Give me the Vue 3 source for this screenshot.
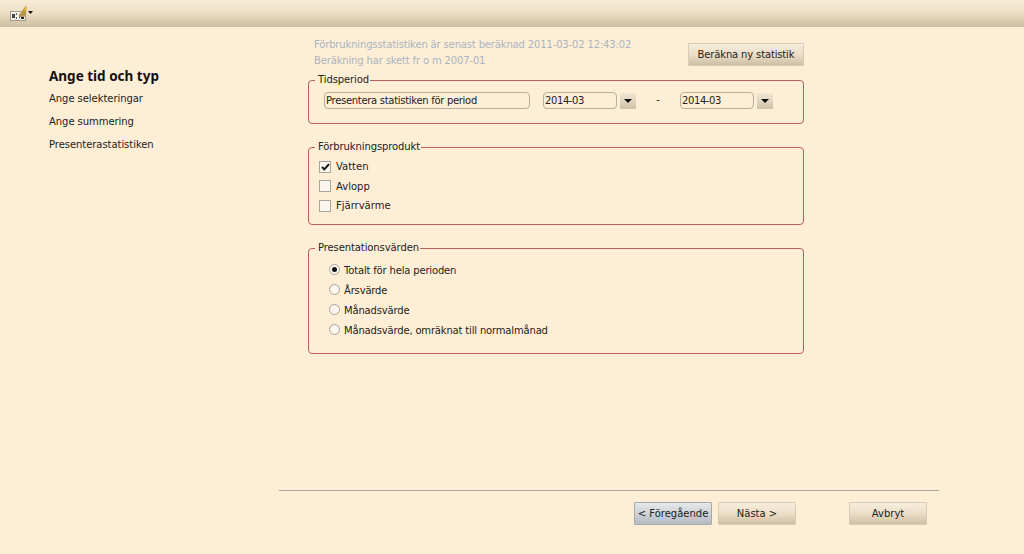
<script setup>
const products = [
  { label: 'Vatten', checked: true },
  { label: 'Avlopp', checked: false },
  { label: 'Fjärrvärme', checked: false },
]
const values = [
  { label: 'Totalt för hela perioden', checked: true },
  { label: 'Årsvärde', checked: false },
  { label: 'Månadsvärde', checked: false },
  { label: 'Månadsvärde, omräknat till normalmånad', checked: false },
]
</script>

<template>
  <div class="page">
    <header class="toolbar">
      <svg class="tool-icon" width="24" height="15" viewBox="0 0 24 15">
        <rect x="0.5" y="5.5" width="15" height="9" fill="#f4f1ea" stroke="#a09c90" stroke-width="1" />
        <rect x="2" y="8" width="3" height="4" fill="#444" />
        <rect x="6" y="7" width="1" height="2" fill="#666" />
        <rect x="6" y="11" width="1" height="2" fill="#666" />
        <rect x="9" y="8" width="1" height="4" fill="#333" />
        <rect x="11" y="9" width="3" height="4" fill="#222" />
        <path d="M9 9 L15 1 L16.5 0 L16 9 L14 11 L9 11 Z" fill="#b8964a" />
        <path d="M13 4 L16.5 0 L16 6 Z" fill="#dcae3c" />
        <path d="M18 5 H23 L20.5 8 Z" fill="#111" />
      </svg>
    </header>

    <div class="main">
      <nav class="nav">
        <h1 class="nav-title">Ange tid och typ</h1>
        <a class="nav-item">Ange selekteringar</a>
        <a class="nav-item">Ange summering</a>
        <a class="nav-item">Presenterastatistiken</a>
      </nav>

      <section class="content">
        <div class="info-row">
          <div class="info">
            <div>Förbrukningsstatistiken är senast beräknad 2011-03-02 12:43:02</div>
            <div>Beräkning har skett fr o m 2007-01</div>
          </div>
          <button class="btn calc">Beräkna ny statistik</button>
        </div>

        <fieldset class="group">
          <legend>Tidsperiod</legend>
          <div class="period">
            <div class="field wide">Presentera statistiken för period</div>
            <div class="field date">2014-03</div>
            <span class="drop"><i></i></span>
            <span class="dash">-</span>
            <div class="field date">2014-03</div>
            <span class="drop"><i></i></span>
          </div>
        </fieldset>

        <fieldset class="group">
          <legend>Förbrukningsprodukt</legend>
          <div class="products">
            <div v-for="p in products" :key="p.label" class="check-row">
              <span class="box">
                <svg v-if="p.checked" width="9" height="8" viewBox="0 0 9 8">
                  <path d="M1 4 L3.4 6.4 L8 1.2" fill="none" stroke="#111" stroke-width="2" />
                </svg>
              </span>
              {{ p.label }}
            </div>
          </div>
        </fieldset>

        <fieldset class="group">
          <legend>Presentationsvärden</legend>
          <div class="values">
            <div v-for="v in values" :key="v.label" class="radio-row">
              <span class="radio"><i v-if="v.checked"></i></span>
              {{ v.label }}
            </div>
          </div>
        </fieldset>
      </section>
    </div>

    <footer class="footer">
      <div class="actions">
        <button class="btn nav-btn active">&lt; Föregående</button>
        <button class="btn nav-btn">Nästa &gt;</button>
        <button class="btn nav-btn cancel">Avbryt</button>
      </div>
    </footer>
  </div>
</template>

<style>
html, body { margin: 0; padding: 0; background: #feeed6; }
</style>

<style scoped>
.page {
  width: 1024px;
  height: 554px;
  display: flex;
  flex-direction: column;
  overflow: hidden;
  background: #feeed6;
  color: #222;
  font-family: "DejaVu Sans", Tahoma, sans-serif;
  font-size: 10px;
}
.toolbar {
  height: 27px;
  flex: none;
  display: flex;
  align-items: center;
  padding-left: 10px;
  box-sizing: border-box;
  background: linear-gradient(#f8ecd6, #eee0c6 45%, #cdbda0);
}
.tool-icon { display: block; margin-top: 0; }
.main { flex: 1; display: flex; min-height: 0; }
.nav {
  width: 308px;
  flex: none;
  box-sizing: border-box;
  padding: 41px 0 0 49px;
  display: flex;
  flex-direction: column;
}
.nav-title {
  margin: 0 0 7px;
  font-size: 13.5px;
  line-height: 16px;
  font-weight: 700;
  color: #111;
  font-family: "Noto Sans", sans-serif;
}
.nav-item { height: 23px; line-height: 15px; letter-spacing: -0.05px; }
.content { width: 496px; flex: none; }
.info-row { display: flex; justify-content: space-between; height: 47px; }
.info {
  padding: 10px 0 0 6px;
  color: #a9b4bf;
  line-height: 16px;
  letter-spacing: -0.15px;
}
.btn {
  font: inherit;
  color: #222;
  height: 23px;
  padding: 0;
  border: 1px solid #d6cbb6;
  background: linear-gradient(#f7eedd, #eadcc4 55%, #cdbfa6);
  box-sizing: border-box;
  border-radius: 1px;
}
.calc { width: 116px; margin-top: 16px; letter-spacing: -0.15px; }
.group {
  margin: 0 0 17px;
  padding: 0;
  border: 1px solid #b95f5f;
  border-radius: 4px;
  box-sizing: border-box;
  min-width: 0;
}
.group:nth-of-type(1) { height: 50px; }
.group:nth-of-type(2) { height: 84px; }
.group:nth-of-type(3) { height: 112px; }
.group legend {
  margin-left: 6px;
  padding: 0 1px 0 3px;
  line-height: 12px;
  color: #222;
  letter-spacing: -0.1px;
}
.period {
  display: flex;
  align-items: flex-start;
  padding: 6px 0 0 15px;
}
.field {
  height: 17px;
  line-height: 15px;
  box-sizing: border-box;
  padding-left: 1px;
  border: 1px solid #b8ae9e;
  border-radius: 4px;
}
.wide { width: 206px; margin-right: 13px; letter-spacing: -0.3px; }
.date { width: 74px; letter-spacing: -0.4px; }
.drop {
  width: 16px;
  height: 16px;
  margin: 1px 0 0 3px;
  display: flex;
  align-items: center;
  justify-content: center;
  background: linear-gradient(#f2e7d3, #cfc2aa);
}
.drop i {
  width: 0;
  height: 0;
  border-left: 4px solid transparent;
  border-right: 4px solid transparent;
  border-top: 4px solid #111;
}
.dash { width: 44px; text-align: center; line-height: 16px; }
.products { padding: 4px 0 0 10px; }
.check-row {
  height: 19.5px;
  display: flex;
  align-items: center;
  gap: 5px;
}
.box {
  width: 12px;
  height: 12px;
  box-sizing: border-box;
  border: 1px solid #a8a498;
  background: #fbf7ee;
  display: flex;
  align-items: center;
  justify-content: center;
}
.values { padding: 6px 0 0 20px; }
.radio-row {
  height: 20px;
  display: flex;
  align-items: center;
  gap: 4px;
  letter-spacing: -0.17px;
}
.radio {
  width: 11px;
  height: 11px;
  box-sizing: border-box;
  border: 1px solid #a8a498;
  border-radius: 50%;
  background: #fbf7ee;
  display: flex;
  align-items: center;
  justify-content: center;
  margin-top: -2px;
}
.radio i {
  width: 5px;
  height: 5px;
  border-radius: 50%;
  background: #111;
}
.footer {
  flex: none;
  height: 64px;
  margin-left: 279px;
  width: 660px;
  border-top: 1px solid #a9a9a4;
  box-sizing: border-box;
}
.actions {
  display: flex;
  padding: 11px 0 0 355px;
}
.nav-btn { width: 78px; margin-right: 6px; }
.cancel { margin-left: 47px; margin-right: 0; }
.active {
  background: linear-gradient(#e6e9ea, #b4bbc2);
  border-color: #a4aab0;
}
</style>
